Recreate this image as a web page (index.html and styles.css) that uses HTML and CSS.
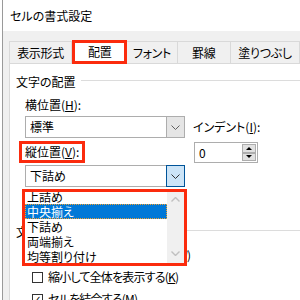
FILE: index.html
```html
<!DOCTYPE html>
<html>
<head>
    <meta charset="utf-8" />
    <title>セルの書式設定</title>
    <link rel="stylesheet" href="styles.css">
</head>
<body>
    <div class="dialog">
        <div class="titlebar">セルの書式設定</div>

        <div class="tabs">
            <div class="tab tab-number">表示形式</div>
            <div class="tab tab-align active">配置</div>
            <div class="tab tab-font">フォント</div>
            <div class="tab tab-border">罫線</div>
            <div class="tab tab-fill">塗りつぶし</div>
        </div>

        <div class="panel">
            <div class="group-title">文字の配置</div>

            <div class="align-grid">
                <div class="col-left">
                    <div class="label label-h">横位置(<u>H</u>):</div>
                    <div class="combo">
                        <span class="combo-value">標準</span>
                        <span class="combo-btn">
                            <svg width="9" height="5" viewBox="0 0 9 5"><path d="M0.5 0.5 L4.5 4.5 L8.5 0.5" fill="none" stroke="#606060" stroke-width="1"/></svg>
                        </span>
                    </div>
                    <div class="label label-v"><span class="mark">縦位置(<u>V</u>):</span></div>
                    <div class="combo combo-open">
                        <span class="combo-value">下詰め</span>
                        <span class="combo-btn">
                            <svg width="9" height="5" viewBox="0 0 9 5"><path d="M0.5 0.5 L4.5 4.5 L8.5 0.5" fill="none" stroke="#333" stroke-width="1"/></svg>
                        </span>

                        <div class="droplist">
                            <div class="items">
                                <div class="item">上詰め</div>
                                <div class="item selected">中央揃え</div>
                                <div class="item">下詰め</div>
                                <div class="item">両端揃え</div>
                                <div class="item">均等割り付け</div>
                            </div>
                            <div class="scrollbar">
                                <svg width="9" height="5" viewBox="0 0 9 5"><path d="M0.5 4.5 L4.5 0.5 L8.5 4.5" fill="none" stroke="#c0c0c0" stroke-width="1.4"/></svg>
                                <svg width="9" height="5" viewBox="0 0 9 5"><path d="M0.5 0.5 L4.5 4.5 L8.5 0.5" fill="none" stroke="#c0c0c0" stroke-width="1.4"/></svg>
                            </div>
                        </div>
                    </div>
                </div>

                <div class="col-right">
                    <div class="label indent-label">インデント(<u>I</u>):</div>
                    <div class="spin">
                        <span class="spin-value">0</span>
                        <span class="spin-btns">
                            <span class="spin-btn"><span class="tri-up"></span></span>
                            <span class="spin-btn"><span class="tri-down"></span></span>
                        </span>
                    </div>
                </div>
            </div>

            <div class="group-title group-control">文字の制御</div>

            <div class="checks">
                <div class="check-row"><span class="checkbox"></span>折り返して全体を表示する(<u>W</u>)</div>
                <div class="check-row"><span class="checkbox"></span>縮小して全体を表示する(<u>K</u>)</div>
                <div class="check-row"><span class="checkbox checked">✓</span>セルを結合する(<u>M</u>)</div>
            </div>
        </div>
    </div>
</body>
</html>
```

FILE: styles.css
```css
* {
    box-sizing: border-box;
}

html, body {
    margin: 0;
    padding: 0;
}

body {
    width: 300px;
    height: 300px;
    overflow: hidden;
    background: #ffffff;
    font-family: "Noto Sans CJK JP", "Noto Sans", sans-serif;
    font-feature-settings: "palt";
    font-size: 12px;
    color: #000000;
}

u {
    text-decoration: underline;
    text-underline-offset: 1px;
}

.dialog {
    margin-left: 2px;
    border-left: 1px solid #9a9a9a;
    height: 300px;
    background: #f0f0f0;
    display: flex;
    flex-direction: column;
}

.titlebar {
    height: 31px;
    line-height: 31px;
    padding-left: 7px;
    background: #ffffff;
}

/* tabs */

.tabs {
    display: flex;
    padding: 10px 0 0 6px;
    height: 32px;
}

.tab {
    height: 22px;
    line-height: 21px;
    text-align: center;
    background: #f0f0f0;
    border: 1px solid #d9d9d9;
    border-bottom: none;
    border-left: none;
    letter-spacing: -0.3px;
}

.tab-number {
    width: 64px;
    border-left: 1px solid #d9d9d9;
}

.tab-align {
    width: 56px;
}

.tab-font {
    width: 51px;
}

.tab-border {
    width: 54px;
}

.tab-fill {
    width: 70px;
}

.tab.active {
    background: #ffffff;
    height: 24px;
    margin-top: -1px;
    line-height: 23px;
    border: none;
    outline: 3px solid #fb2b0d;
    outline-offset: -3px;
    position: relative;
    z-index: 2;
}

/* panel */

.panel {
    flex: 1;
    background: #ffffff;
    border-top: 1px solid #d9d9d9;
    border-left: 1px solid #d9d9d9;
    margin-left: 6px;
    padding-left: 6px;
}

.group-title {
    display: flex;
    align-items: center;
    line-height: 16px;
    margin-top: 10px;
}

.group-title::after {
    content: "";
    flex: 1;
    height: 1px;
    background: #dcdcdc;
    margin: 0 0 3px 5px;
}

.align-grid {
    display: grid;
    grid-template-columns: 160px 1fr;
    column-gap: 8px;
    padding-left: 9px;
    margin-top: 7px;
}

.label {
    line-height: 16px;
    height: 16px;
}

.label-v {
    margin-top: 6px;
}

.mark {
    display: inline-block;
    padding: 0 3px;
    margin-left: -3px;
    outline: 3px solid #fb2b0d;
}

/* combo boxes */

.combo {
    position: relative;
    display: flex;
    height: 22px;
    margin-top: 3px;
    border: 1px solid #adadad;
    background: #ffffff;
}

.combo-open {
    margin-top: 5px;
}

.combo-value {
    flex: 1;
    line-height: 20px;
    padding-left: 4px;
}

.combo-btn {
    width: 18px;
    display: flex;
    align-items: center;
    justify-content: center;
    background: #e5e5e5;
    border-left: 1px solid #adadad;
}

.combo-open .combo-btn {
    background: #cce4f7;
    border: 1px solid #005499;
    margin: -1px -1px -1px 0;
    width: 19px;
}

.droplist {
    position: absolute;
    top: 23px;
    left: -4px;
    width: 165px;
    height: 77px;
    display: flex;
    background: #ffffff;
    z-index: 5;
}

.droplist::after {
    content: "";
    position: absolute;
    top: 0;
    left: 0;
    right: 0;
    bottom: 0;
    border: 3px solid #fb2b0d;
}

.items {
    flex: 1;
    padding-left: 3px;
}

.item {
    height: 15px;
    line-height: 15px;
    padding-left: 2px;
}

.item.selected {
    background: #0078d7;
    color: #ffffff;
    border: 1px dotted #f0a030;
    line-height: 13px;
    padding-left: 1px;
}

.scrollbar {
    width: 17px;
    margin: 3px 3px 3px 0;
    background: #f0f0f0;
    display: flex;
    flex-direction: column;
    justify-content: space-between;
    align-items: center;
    padding: 5px 0 7px;
}

/* indent */

.indent-label {
    margin-top: 22px;
}

.spin {
    display: flex;
    width: 64px;
    height: 21px;
    margin: 7px 0 0 1px;
    border: 1px solid #adadad;
}

.spin-value {
    flex: 1;
    line-height: 19px;
    padding-left: 4px;
}

.spin-btns {
    width: 15px;
    display: flex;
    flex-direction: column;
    padding: 1px 1px 1px 0;
}

.spin-btn {
    flex: 1;
    background: #e1e1e1;
    border: 1px solid #adadad;
    display: flex;
    align-items: center;
    justify-content: center;
}

.tri-up {
    border-left: 3px solid transparent;
    border-right: 3px solid transparent;
    border-bottom: 3px solid #000000;
}

.tri-down {
    border-left: 3px solid transparent;
    border-right: 3px solid transparent;
    border-top: 3px solid #000000;
}

/* checkboxes */

.group-control {
    margin-top: 37px;
}

.checks {
    margin-top: 4px;
}

.check-row {
    display: flex;
    align-items: center;
    height: 22px;
    padding-left: 16px;
    line-height: 16px;
    white-space: nowrap;
    letter-spacing: -0.8px;
}

.checkbox {
    flex: none;
    width: 11px;
    height: 11px;
    border: 1px solid #333333;
    margin-right: 5px;
    font-size: 10px;
    line-height: 9px;
    text-align: center;
    letter-spacing: 0;
    font-family: "DejaVu Sans", sans-serif;
}
```
